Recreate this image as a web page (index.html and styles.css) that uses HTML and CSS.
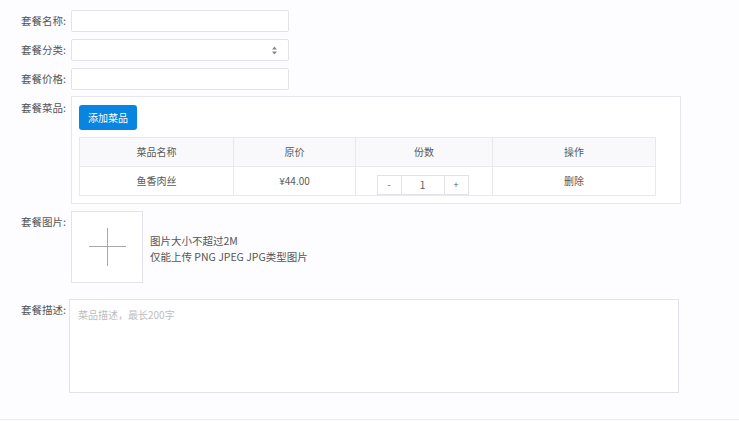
FILE: index.html
```html
<!DOCTYPE html>
<html lang="zh-CN">
<head>
<meta charset="UTF-8">
<meta name="viewport" content="width=device-width, initial-scale=1.0">
<title>新增套餐</title>
<link rel="stylesheet" href="styles.css">
</head>
<body>
<div class="page">
    <div class="form-row">
        <label class="form-label">套餐名称:</label>
        <input class="form-input" type="text">
    </div>
    <div class="form-row">
        <label class="form-label">套餐分类:</label>
        <div class="form-input select">
            <svg class="select-arrow" width="7" height="9" viewBox="0 0 7 9">
                <path d="M3.5 0.5 L6 3.5 L1 3.5 Z M3.5 8.5 L6 5.5 L1 5.5 Z" fill="#888"/>
            </svg>
        </div>
    </div>
    <div class="form-row">
        <label class="form-label">套餐价格:</label>
        <input class="form-input" type="text">
    </div>

    <div class="form-row dishes-row">
        <label class="form-label">套餐菜品:</label>
        <div class="dishes-box">
            <button class="btn-primary" type="button">添加菜品</button>
            <table class="dish-table">
                <thead>
                    <tr>
                        <th class="col-name">菜品名称</th>
                        <th class="col-price">原价</th>
                        <th class="col-count">份数</th>
                        <th class="col-op">操作</th>
                    </tr>
                </thead>
                <tbody>
                    <tr>
                        <td>鱼香肉丝</td>
                        <td>¥44.00</td>
                        <td class="count-cell">
                            <div class="counter">
                                <span class="counter-btn">-</span>
                                <span class="counter-val">1</span>
                                <span class="counter-btn">+</span>
                            </div>
                        </td>
                        <td>删除</td>
                    </tr>
                </tbody>
            </table>
        </div>
    </div>

    <div class="form-row image-row">
        <label class="form-label">套餐图片:</label>
        <div class="upload-box">
            <span class="plus-h"></span>
            <span class="plus-v"></span>
        </div>
        <div class="upload-tip">
            <div>图片大小不超过2M</div>
            <div>仅能上传 PNG JPEG JPG类型图片</div>
        </div>
    </div>

    <div class="form-row desc-row">
        <label class="form-label">套餐描述:</label>
        <textarea class="form-textarea" placeholder="菜品描述，最长200字"></textarea>
    </div>
</div>
</body>
</html>
```

FILE: styles.css
```css
body {
    margin: 0;
    padding: 0;
    background-color: #fdfcfe;
    font-family: "Noto Sans CJK SC", "Noto Sans", sans-serif;
    color: #555;
}

.page {
    height: 420px;
    padding-top: 10px;
    box-sizing: border-box;
    border-bottom: 1px solid #ececf0;
}

.form-row {
    display: flex;
    align-items: flex-start;
    margin-bottom: 7px;
}

.form-label {
    width: 66px;
    flex-shrink: 0;
    text-align: right;
    font-size: 10.5px;
    line-height: 22px;
    color: #555;
}

.form-input {
    width: 218px;
    height: 22px;
    margin: 0 0 0 5px;
    padding: 0 8px;
    border: 1px solid #e2e2e8;
    border-radius: 2px;
    background-color: #fff;
    box-sizing: border-box;
    outline: none;
}

.select {
    display: flex;
    align-items: center;
    justify-content: flex-end;
    padding-right: 10px;
}

.dishes-row {
    margin-top: -1px;
    margin-bottom: 7px;
}

.dishes-row .form-label {
    margin-top: 1px;
}

.dishes-box {
    width: 610px;
    margin-left: 5px;
    padding: 8px 24px 7px 7px;
    border: 1px solid #e6e6ec;
    background-color: #fff;
    box-sizing: border-box;
}

.btn-primary {
    display: block;
    width: 58px;
    height: 25px;
    padding: 0;
    border: none;
    border-radius: 3px;
    background-color: #0a84e1;
    color: #fff;
    font-family: inherit;
    font-size: 10px;
    cursor: pointer;
}

.dish-table {
    width: 577px;
    margin-top: 7px;
    border-collapse: collapse;
    table-layout: fixed;
    font-size: 10px;
    color: #5a5a5a;
    text-align: center;
}

.dish-table th,
.dish-table td {
    height: 28px;
    padding: 0;
    border: 1px solid #e8e8ee;
    font-weight: normal;
    line-height: 14px;
}

.dish-table th {
    background-color: #f9f9fb;
}

.col-name { width: 153px; }
.col-price { width: 121px; }
.col-count { width: 136px; }

.count-cell {
    vertical-align: bottom;
}

.counter {
    display: inline-flex;
    height: 20px;
    margin-left: -3px;
    vertical-align: bottom;
    border: 1px solid #e2e2e8;
    box-sizing: border-box;
    background-color: #fff;
}

.counter-btn,
.counter-val {
    display: flex;
    align-items: center;
    justify-content: center;
    font-size: 9px;
}

.counter-btn {
    width: 23px;
}

.counter-val {
    width: 42px;
    border-left: 1px solid #e2e2e8;
    border-right: 1px solid #e2e2e8;
    font-size: 10px;
}

.image-row {
    margin-bottom: 16px;
}

.upload-box {
    position: relative;
    width: 72px;
    height: 72px;
    margin-left: 5px;
    border: 1px solid #e2e2e8;
    background-color: #fff;
    box-sizing: border-box;
}

.plus-h {
    position: absolute;
    left: 17px;
    top: 34px;
    width: 37px;
    height: 1px;
    background-color: #a8a8a8;
}

.plus-v {
    position: absolute;
    left: 35px;
    top: 16px;
    width: 1px;
    height: 38px;
    background-color: #a8a8a8;
}

.upload-tip {
    margin: 22px 0 0 7px;
    font-size: 10.5px;
    line-height: 16px;
    color: #555;
}

.form-textarea {
    width: 610px;
    height: 94px;
    margin-left: 3px;
    padding: 7px 8px;
    border: 1px solid #e2e2e8;
    background-color: #fff;
    box-sizing: border-box;
    resize: none;
    outline: none;
    font-family: inherit;
    font-size: 10px;
    color: #555;
}

.form-textarea::placeholder {
    color: #bdbdbd;
}
```
